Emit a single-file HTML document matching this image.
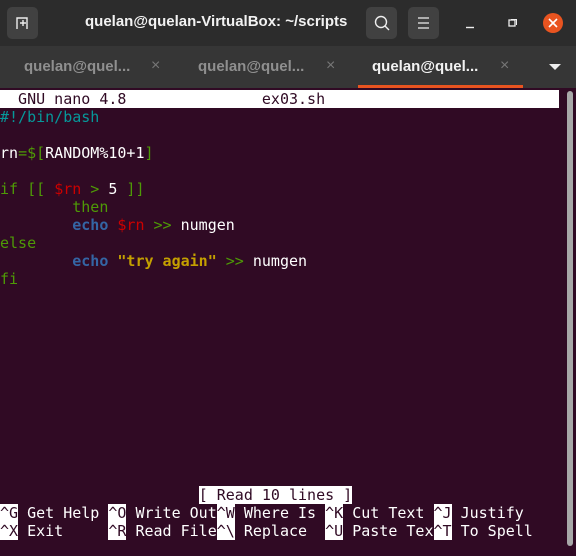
<!DOCTYPE html>
<html><head><meta charset="utf-8"><style>
*{margin:0;padding:0;box-sizing:border-box}
body{width:576px;height:556px;background:#300a24;overflow:hidden;position:relative;font-family:"Liberation Sans",sans-serif}
#tb{position:absolute;left:0;top:0;width:576px;height:46px;background:#2c2c2c}
#tabs{position:absolute;left:0;top:46px;width:576px;height:42px;background:#363636}
.btn{position:absolute;top:7px;width:31px;height:32px;background:#414141;border-radius:5px}
.title{position:absolute;left:85px;top:13px;color:#f2f2f2;font-weight:bold;font-size:15px;letter-spacing:0px;white-space:nowrap}
.tab{position:absolute;top:12px;font-weight:bold;font-size:15px;letter-spacing:0px;color:#8f8f8f;white-space:nowrap}
.x{position:absolute;top:11px;color:#777;font-size:16px}
.term{position:absolute;left:0;top:90px;font-family:"DejaVu Sans Mono","Liberation Mono",monospace;font-size:15px;line-height:18px;color:#fff}
.term div{height:18px;white-space:pre}
.inv{background:#fff;color:#300a24}
.c{color:#06989a}.g{color:#4e9a06}.r{color:#cc0000}.b{color:#3465a4;font-weight:bold}.y{color:#c4a000;font-weight:bold}
</style></head><body>
<div id="tb">
 <div class="btn" style="left:7px"><svg width="31" height="32"><path d="M10 22V11h10v11M13 16h6M16 13v6" stroke="#eee" stroke-width="1.4" fill="none"/></svg></div>
 <div class="title">quelan@quelan-VirtualBox: ~/scripts</div>
 <div class="btn" style="left:366px"><svg width="31" height="32"><circle cx="15" cy="15" r="5.5" stroke="#eee" stroke-width="1.4" fill="none"/><path d="M19 19l4 4" stroke="#eee" stroke-width="1.4"/></svg></div>
 <div class="btn" style="left:408px"><svg width="31" height="32"><path d="M10 11h11M10 16h11M10 21h11" stroke="#eee" stroke-width="1.3"/></svg></div>
 <svg style="position:absolute;left:420px;top:0" width="156" height="46"><path d="M46 27.5h8" stroke="#eee" stroke-width="1.4"/><rect x="89" y="20" width="6" height="6" stroke="#eee" stroke-width="1.3" fill="none"/><path d="M91 19.5h5.5v5.5" stroke="#eee" stroke-width="1" fill="none"/><circle cx="133" cy="23" r="10" fill="#e95420"/><path d="M129 19l8 8M137 19l-8 8" stroke="#fff" stroke-width="1.6"/></svg>
</div>
<div id="tabs">
 <div class="tab" style="left:24px">quelan@quel...</div><div class="x" style="left:151px">×</div>
 <div class="tab" style="left:198px">quelan@quel...</div><div class="x" style="left:326px">×</div>
 <div class="tab" style="left:372px;color:#f2f2f2">quelan@quel...</div><div class="x" style="left:500px">×</div>
 <svg style="position:absolute;left:549px;top:18px" width="12" height="8"><path d="M0 0h12L6 6z" fill="#eee"/></svg>
 <div style="position:absolute;left:358px;top:39px;width:165px;height:3px;background:#e95420"></div>
</div>
<div style="position:absolute;left:567px;top:91px;width:6px;height:455px;background:#a8a8a8;border-radius:3px"></div>
<div class="term">
<div><span class="inv" style="display:inline-block;width:559px">  GNU nano 4.8               ex03.sh</span></div>
<div class="c">#!/bin/bash</div>
<div></div>
<div>rn<span class="g">=$[</span>RANDOM%10+1<span class="g">]</span></div>
<div></div>
<div><span class="g">if [[ </span><span class="r">$rn</span><span class="g"> &gt; </span>5<span class="g"> ]]</span></div>
<div class="g">        then</div>
<div>        <span class="b">echo</span> <span class="r">$rn</span> <span class="g">&gt;&gt;</span> numgen</div>
<div class="g">else</div>
<div>        <span class="b">echo</span> <span class="y">"try again"</span> <span class="g">&gt;&gt;</span> numgen</div>
<div class="g">fi</div>
<div></div><div></div><div></div><div></div><div></div><div></div><div></div><div></div><div></div><div></div><div></div>
<div>                      <span class="inv">[ Read 10 lines ]</span></div>
<div><span class="inv">^G</span> Get Help <span class="inv">^O</span> Write Out<span class="inv">^W</span> Where Is <span class="inv">^K</span> Cut Text <span class="inv">^J</span> Justify</div>
<div><span class="inv">^X</span> Exit     <span class="inv">^R</span> Read File<span class="inv">^\</span> Replace  <span class="inv">^U</span> Paste Tex<span class="inv">^T</span> To Spell</div>
</div>
</body></html>
